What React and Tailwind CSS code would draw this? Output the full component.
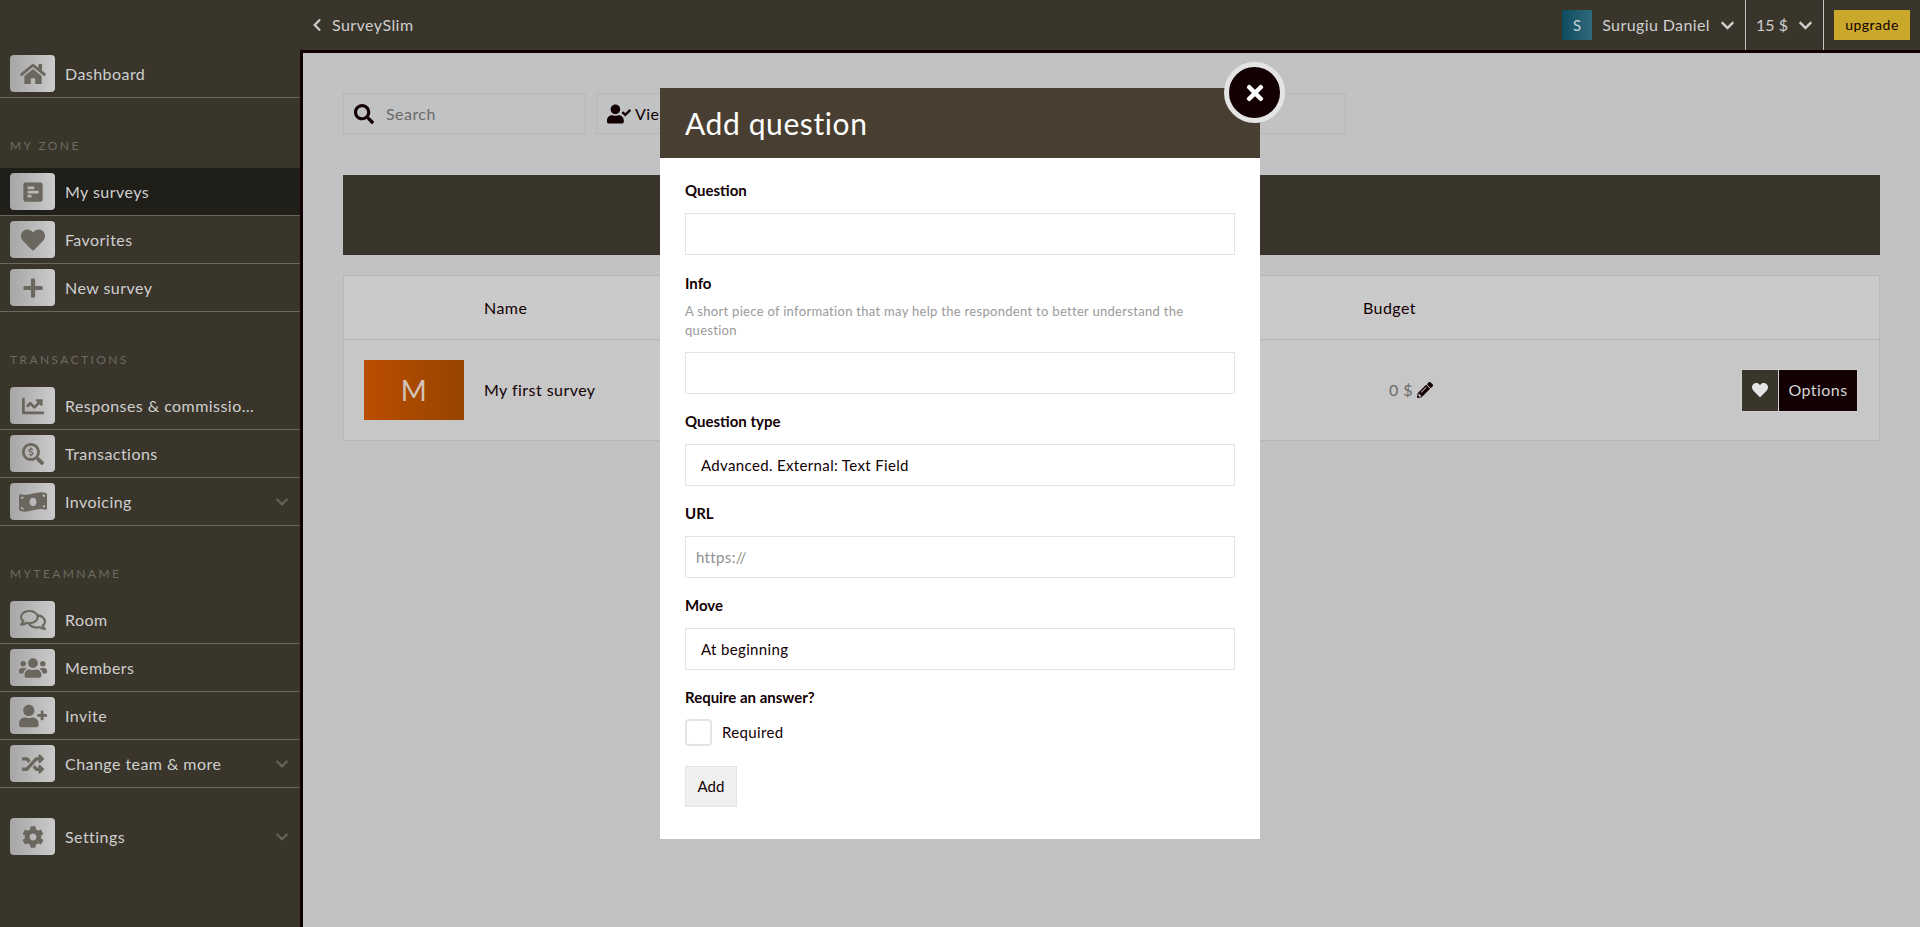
import React from "react";
import { FaHome, FaPollH, FaHeart, FaPlus, FaChartLine, FaSearchDollar, FaMoneyBillWave, FaRegComments, FaUsers, FaUserPlus, FaRandom, FaCog, FaChevronDown, FaChevronLeft, FaSearch, FaUserCheck, FaPencilAlt, FaTimes } from "react-icons/fa";

const font = "font-['Lato','Noto_Sans',sans-serif]";

function Item({ icon: Icon, label, active, caret, size = 22, last }) {
  return (
    <div className={`h-12 flex items-center pl-2.5 pr-2.5 border-b ${last ? "border-transparent" : "border-[#6b675d]"} ${active ? "bg-[#1f1e19]" : ""}`}>
      <div className="w-[45px] h-[37px] rounded bg-gradient-to-r from-[#a6a6a6] to-[#cbcbcb] flex items-center justify-center text-[#6b675e] shrink-0">
        <Icon style={{ fontSize: size }} />
      </div>
      <span className="ml-2.5 text-base tracking-[0.45px] text-[#cfcfcf] truncate w-[190px]">{label}</span>
      {caret && <FaChevronDown className="text-[#66635a] text-sm ml-auto mr-[1px]" />}
    </div>
  );
}

function SectionLabel({ children }) {
  return <div className="mt-10 mb-3.5 pl-2.5 h-4 leading-4 text-xs tracking-[2.4px] text-[#6d6a62]">{children}</div>;
}

function Field({ label, help, children }) {
  return (
    <div>
      <div className="text-[15px] font-bold text-[#120003] leading-[22px]">{label}</div>
      {help && <div className="text-[13px] leading-[19px] text-[#9a9a9a] mt-2 tracking-[0.3px]">{help}</div>}
      <div className={help ? "mt-3" : "mt-3"}>{children}</div>
    </div>
  );
}

function Input({ children, select, placeholder }) {
  return (
    <div className={`h-[42px] border border-[#e4e4e4] bg-white flex items-center text-[15px] tracking-[0.35px] ${select ? "pl-[15px] text-[#120003]" : "pl-[10px] text-[#8f8f8f]"}`}>
      {children || placeholder}
    </div>
  );
}

export default function App() {
  return (
    <div className={`${font} relative w-full h-[927px] overflow-hidden bg-[#39352b]`}>
      <header className="h-[50px] flex items-center text-[#cfcfcf]">
        <div className="ml-[308px] flex items-center text-base tracking-[0.45px]">
          <FaChevronLeft className="text-sm mr-2 ml-0.5" />
          <span>SurveySlim</span>
        </div>
        <div className="ml-auto flex items-stretch h-[50px]">
          <div className="flex items-center pr-2.5">
            <div className="w-[30px] h-[30px] bg-gradient-to-r from-[#0f4b5f] to-[#306b7c] flex items-center justify-center text-[15px] text-[#c6d4d8]">S</div>
            <span className="ml-2.5 text-base tracking-[0.4px]">Surugiu Daniel</span>
            <FaChevronDown className="text-[15px] ml-2.5" />
          </div>
          <div className="flex items-center border-l border-[#c4c4c4] pl-2.5 pr-2.5 text-base">
            <span>15 $</span>
            <FaChevronDown className="text-[15px] ml-2.5" />
          </div>
          <div className="flex items-center border-l border-[#c4c4c4] pl-2.5 pr-2.5">
            <div className="w-[76px] h-[30px] bg-[#c9a82b] text-[#120003] text-sm tracking-[0.5px] flex items-center justify-center">upgrade</div>
          </div>
        </div>
      </header>
      <div className="flex h-[877px]">
        <aside className="w-[300px] shrink-0">
          <Item icon={FaHome} label="Dashboard" size={26} />
          <SectionLabel>MY ZONE</SectionLabel>
          <Item icon={FaPollH} label="My surveys" active />
          <Item icon={FaHeart} label="Favorites" size={24} />
          <Item icon={FaPlus} label="New survey" />
          <SectionLabel>TRANSACTIONS</SectionLabel>
          <Item icon={FaChartLine} label="Responses & commissions" />
          <Item icon={FaSearchDollar} label="Transactions" />
          <Item icon={FaMoneyBillWave} label="Invoicing" caret size={28} />
          <SectionLabel>MYTEAMNAME</SectionLabel>
          <Item icon={FaRegComments} label="Room" size={26} />
          <Item icon={FaUsers} label="Members" size={28} />
          <Item icon={FaUserPlus} label="Invite" size={28} />
          <Item icon={FaRandom} label="Change team & more" caret />
          <div className="h-[25px]" />
          <Item icon={FaCog} label="Settings" caret last />
        </aside>
        <main className="flex-1 bg-[#c1c2c4] border-l-[3px] border-t-[3px] border-[#120003] pl-10 pr-10 pt-10">
          <div className="flex gap-2.5 h-[41px]">
            <div className="w-[243px] border border-[#b6b7b8] flex items-center pl-2.5">
              <FaSearch className="text-[#120003] text-xl" />
              <span className="ml-3 text-base tracking-[0.45px] text-[#6b6a6a]">Search</span>
            </div>
            <div className="w-[750px] border border-[#b6b7b8] flex items-center pl-2.5 text-[#120003]">
              <FaUserCheck className="text-2xl" />
              <span className="ml-1 text-base tracking-[0.45px]">View all</span>
              <span className="ml-auto mr-[82px] text-base text-[#6b6a6a]">g</span>
            </div>
          </div>
          <div className="h-20 mt-[41px] bg-[#39352b]" />
          <div className="mt-5 border border-[#b6b7b8] text-[#120003]">
            <div className="h-[64px] bg-[#cacaca] border-b border-[#b6b7b8] flex items-center text-base tracking-[0.45px]">
              <span className="ml-[140px]">Name</span>
              <span className="ml-auto mr-[463px]">Budget</span>
            </div>
            <div className="h-[100px] bg-[#c7c7c7] flex items-center text-base tracking-[0.45px]">
              <div className="ml-5 w-[100px] h-[60px] bg-gradient-to-r from-[#bb4d00] to-[#964400] flex items-center justify-center text-[28px] text-[#d2c4b8]">M</div>
              <span className="ml-5">My first survey</span>
              <div className="ml-auto flex items-center w-[490px]">
                <span className="text-[#6b6a6a]">0 $</span>
                <FaPencilAlt className="text-[#120003] ml-1" />
                <div className="ml-auto mr-[21px] flex h-[43px] border border-[#d0d0d0]">
                  <div className="w-[37px] bg-[#39352b] border-r border-[#d0d0d0] flex items-center justify-center text-[#e4e4e4]"><FaHeart /></div>
                  <div className="w-[78px] bg-[#120003] text-[#d6d6d6] flex items-center justify-center">Options</div>
                </div>
              </div>
            </div>
          </div>
        </main>
      </div>

      <div className="absolute left-[660px] top-[88px] w-[600px] h-[751px] bg-white">
        <div className="h-[70px] bg-[#483f32] flex items-center pl-[25px] text-[30px] text-white tracking-[0.6px]">Add question</div>
        <div className="px-[25px] pt-[21px]">
          <Field label="Question"><Input /></Field>
          <div className="h-[17px]" />
          <Field label="Info" help={<>A short piece of information that may help the respondent to better understand the question</>}><Input /></Field>
          <div className="h-4" />
          <Field label="Question type"><Input select>Advanced. External: Text Field</Input></Field>
          <div className="h-4" />
          <Field label="URL"><Input placeholder="https://" /></Field>
          <div className="h-4" />
          <Field label="Move"><Input select>At beginning</Input></Field>
          <div className="h-4" />
          <div className="text-[15px] font-bold text-[#120003] leading-[22px]">Require an answer?</div>
          <div className="mt-[11px] flex items-center">
            <div className="w-[27px] h-[27px] rounded border-2 border-[#e4e4e4]" />
            <span className="ml-2.5 text-[15px] tracking-[0.35px] text-[#120003]">Required</span>
          </div>
          <div className="mt-5 w-[52px] h-[41px] bg-[#f0f0f0] border border-[#e4e4e4] flex items-center justify-center text-[15px] text-[#120003]">Add</div>
        </div>
      </div>
      <div className="absolute left-[1224px] top-[62px] w-[61px] h-[61px] rounded-full bg-[#120003] border-[5px] border-[#e4e4e4] flex items-center justify-center text-white text-2xl">
        <FaTimes />
      </div>
    </div>
  );
}
